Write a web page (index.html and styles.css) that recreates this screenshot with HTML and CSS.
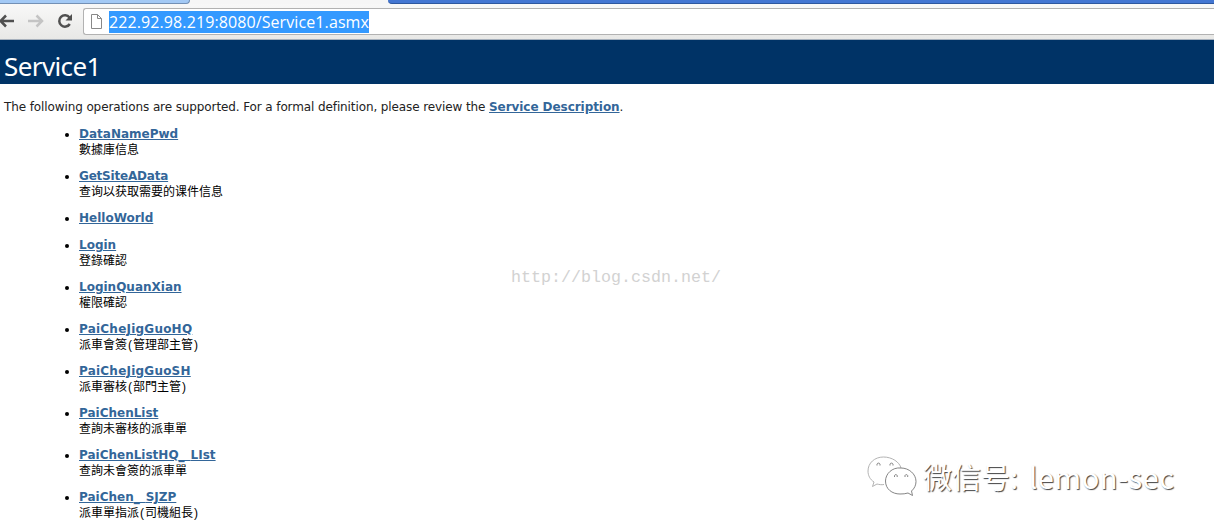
FILE: index.html
```
<!DOCTYPE html>
<html lang="en">
<head>
<meta charset="utf-8">
<title>Service1 Web Service</title>
<link rel="stylesheet" href="styles.css">
</head>
<body>
<header class="browser">
  <div class="tabs"><div class="tab"></div><div class="frame"></div></div>
  <div class="toolbar">
    <svg class="nav" width="82" height="28" viewBox="0 0 82 28" fill="none">
      <path d="M14 12H1M6 6.500L0.500 12L6 17.500" stroke="#505050" stroke-width="2.500"/>
      <path d="M28 12H41M36.500 6.500L42 12L36.500 17.500" stroke="#c4c4c4" stroke-width="2.500"/>
      <path d="M69.500 8.500A5.700 5.700 0 1 0 69.800 15" stroke="#505050" stroke-width="2.500"/>
      <path d="M72 5V11.500H65.500Z" fill="#505050"/>
    </svg>
    <div class="address">
      <svg class="page-icon" width="13" height="16" viewBox="0 0 13 16"><path d="M1.500 .5H7.500L11.500 4.500V14.500H1.500ZM7.500 .5V4.500H11.500" fill="#fff" stroke="#888"/></svg>
      <span class="url">222.92.98.219:8080/Service1.asmx</span>
    </div>
  </div>
</header>
<h1 class="heading"><span>Service1</span></h1>
<main class="content">
  <p class="intro"><span class="intro-text">The following operations are supported. For a formal definition, please review the </span><a class="description">Service Description</a>.</p>
  <ul class="operations">
    <li><a>DataNamePwd</a><div>數據庫信息</div></li>
    <li><a class="tight">GetSiteAData</a><div>查询以获取需要的课件信息</div></li>
    <li><a>HelloWorld</a></li>
    <li><a>Login</a><div>登錄確認</div></li>
    <li><a>LoginQuanXian</a><div>權限確認</div></li>
    <li><a class="loose">PaiCheJigGuoHQ</a><div>派車會簽<i>(</i>管理部主管<i>)</i></div></li>
    <li><a class="loose">PaiCheJigGuoSH</a><div>派車審核<i>(</i>部門主管<i>)</i></div></li>
    <li><a>PaiChenList</a><div>查詢未審核的派車單</div></li>
    <li><a>PaiChenListHQ<span class="wide">_</span>LIst</a><div>查詢未會簽的派車單</div></li>
    <li><a>PaiChen<span class="wide">_</span>SJZP</a><div>派車單指派<i>(</i>司機組長<i>)</i></div></li>
  </ul>
</main>
<div class="blog-mark">http://blog.csdn.net/</div>
<div class="account-mark">
  <svg width="52" height="46" viewBox="0 0 52 46" fill="#fff" stroke="#777" stroke-width=".9">
    <path d="M17 30.500C14.500 31 12 30.500 10 30L5.500 32.500L7 28C3 25.500 1 21.500 1 17C1 9 7.500 3 16.500 3C25 3 32.500 8 34 14" stroke="#aaa"/>
    <path d="M34 14C25 13 18.500 20 18.500 27C18.500 35 25 40 33 40C36 40 38.500 39.800 41 39L45.500 41.500L44.500 37C47.500 34.500 49 31 49 27.500C49 20 42 14 34 14Z"/>
    <path d="M10 11.500V10A1.700 1.700 0 0 1 13 10V11.500M23 11.500V10A1.700 1.700 0 0 1 26 10V11.500M27.500 23V21.500A1.500 1.500 0 0 1 30.200 21.500V23M38 23V21.500A1.500 1.500 0 0 1 40.700 21.500V23"/>
  </svg>
  <span class="account-label">微信号:</span><span class="account-name">lemon-sec</span>
</div>
</body>
</html>
```
FILE: styles.css
```
* { box-sizing: border-box; }
body {
  margin: 0;
  height: 532px;
  overflow: hidden;
  position: relative;
  background: #fff;
  color: #000;
  font: 12px/16px "DejaVu Sans", "Noto Sans CJK TC", sans-serif;
}
.browser { height: 40px; background: #f1f1f1; border-bottom: 1px solid #a6b0bc; }
.tabs { height: 4px; display: flex; justify-content: space-between; background: #f6f6f6; }
.tab { width: 190px; background: #a3c9f5; border-bottom: 1px solid #7390b5; border-right: 1px solid #7390b5; border-bottom-right-radius: 4px; }
.frame { width: 826px; background: #4376d2; border-bottom: 1px solid #2d579e; border-bottom-left-radius: 4px; }
.toolbar { height: 35px; padding-top: 4px; display: flex; background: linear-gradient(#f8f8f8, #e8e8e6); }
.nav { flex: none; margin-top: 1px; }
.address { flex: 1; height: 27px; margin-left: 1px; border: 1px solid #b2b2b2; border-right: 0; border-radius: 3px 0 0 3px; background: #fff; display: flex; align-items: flex-start; padding: 2px 0 0 6px; }
.page-icon { margin: 3px 6px 0 0; }
.url { height: 22px; background: #3399ff; color: #fff; font: 16px/22px "Open Sans", sans-serif; letter-spacing: .1px; white-space: nowrap; }
.heading { margin: 0; height: 44px; padding: 10px 0 0 4px; background: #003366; color: #fff; font: 26px/32px "Noto Sans", sans-serif; letter-spacing: -.6px; }
.content { padding: 15px 0 0 4px; }
.intro { margin: 0 0 11px; white-space: nowrap; color: #222; }
.intro-text { letter-spacing: -.108px; }
.description { letter-spacing: -.06px; }
a { color: #336699; font-weight: bold; text-decoration: underline; }
.tight { letter-spacing: -.2px; }
.loose { letter-spacing: .22px; }
.wide { letter-spacing: 6px; }
.operations { margin: 0; padding: 0 0 0 75px; }
.operations li { margin-bottom: 10px; height: 32px; }
.operations li:nth-child(3) { height: 17px; }
.operations li div { margin-top: -1px; font-family: "Noto Sans CJK TC", sans-serif; font-size: 12px; }
.operations i { display: inline-block; width: 6px; font-family: "Liberation Sans", sans-serif; font-style: normal; text-align: center; }
.blog-mark { position: absolute; left: 511px; top: 267px; color: #d2d2d2; font: 16.670px/22px "Liberation Mono", monospace; }
.account-mark { position: absolute; left: 867px; top: 454px; height: 46px; display: flex; align-items: flex-start; color: #fff; font: 29px/44px "Noto Sans CJK SC", sans-serif; text-shadow: 1px 1px 1px #444; }
.account-label { margin: 0 0 0 4px; }
.account-name { margin: 0 0 0 11px; letter-spacing: .5px; }
```
